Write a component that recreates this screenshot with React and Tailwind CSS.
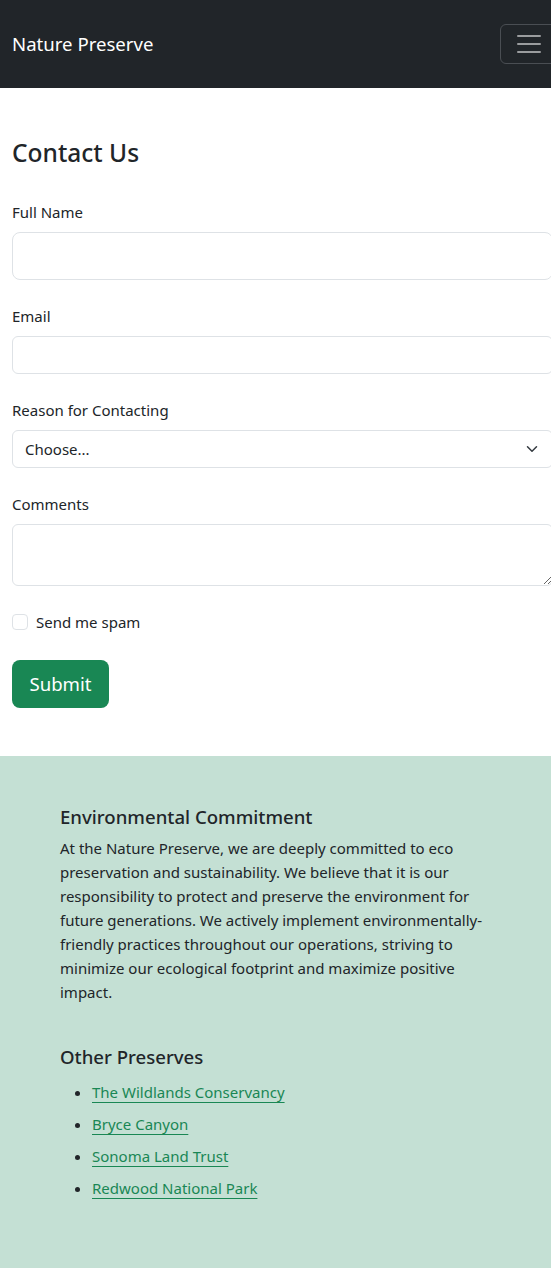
export default function App() {
    const preserves = ["The Wildlands Conservancy", "Bryce Canyon", "Sonoma Land Trust", "Redwood National Park"];

    return (
        <div className="w-[551px] overflow-hidden bg-white text-[#212529]" style={{ fontFamily: '"Noto Sans", "Open Sans", sans-serif' }}>
            <nav className="w-[570px] h-[88px] bg-[#212529] flex items-center justify-between px-3">
                <span className="text-white text-[18.6px] leading-[30px]">Nature Preserve</span>
                <button className="w-[58px] h-[40px] border border-[#4a4e53] rounded-[6px] flex items-center justify-center">
                    <svg width="30" height="30" viewBox="0 0 30 30">
                        <path d="M4 7h22M4 15h22M4 23h22" stroke="rgba(255,255,255,0.55)" strokeWidth="2" strokeLinecap="round" fill="none" />
                    </svg>
                </button>
            </nav>

            <div className="w-[565px] px-3 pt-[49px] pb-12">
                <h2 className="text-[24.5px] leading-[31px] font-medium mb-8">Contact Us</h2>

                <label className="block text-[15px] leading-6 mb-2">Full Name</label>
                <input type="text" className="block w-full h-[48px] border border-[#dee2e6] rounded-[8px] mb-6 px-4" />

                <label className="block text-[15px] leading-6 mb-2">Email</label>
                <input type="email" className="block w-full h-[38px] border border-[#dee2e6] rounded-[6px] mb-6 px-3" />

                <label className="block text-[15px] leading-6 mb-2">Reason for Contacting</label>
                <div className="w-full h-[38px] border border-[#dee2e6] rounded-[6px] mb-6 flex items-center justify-between pl-3 pr-3 text-[15px]">
                    <span>Choose...</span>
                    <svg width="16" height="12" viewBox="0 0 16 16">
                        <path d="m2 5 6 6 6-6" stroke="#343a40" strokeWidth="2" strokeLinecap="round" strokeLinejoin="round" fill="none" />
                    </svg>
                </div>

                <label className="block text-[15px] leading-6 mb-2">Comments</label>
                <textarea className="block w-full h-[62px] border border-[#dee2e6] rounded-[6px] mb-6 px-3 py-1.5" />

                <div className="flex items-center h-6 mb-[26px]">
                    <span className="w-4 h-4 border border-[#dee2e6] rounded-[4px] bg-white" />
                    <span className="ml-2 text-[15px]">Send me spam</span>
                </div>

                <button className="bg-[#198754] text-white text-[18.6px] leading-[30px] h-[48px] w-[97px] rounded-[8px]">Submit</button>
            </div>

            <section className="bg-[#c4e0d4] pt-[49px] pb-12 px-[60px] min-h-[513px]">
                <h5 className="text-[18.6px] leading-6 font-medium mb-[7px]">Environmental Commitment</h5>
                <p className="text-[15px] leading-6 w-[450px] mb-[41px]">
                    At the Nature Preserve, we are deeply committed to eco preservation and sustainability. We believe that it is our responsibility to protect and preserve the environment for future generations. We actively implement environmentally-friendly practices throughout our operations, striving to minimize our ecological footprint and maximize positive impact.
                </p>
                <h5 className="text-[18.6px] leading-6 font-medium mb-[11px]">Other Preserves</h5>
                <ul className="list-disc pl-8 text-[15px] leading-6">
                    {preserves.map((p, i) => (
                        <li key={i} className="mb-2">
                            <a href="#" className="text-[#198754] underline underline-offset-4 decoration-1">{p}</a>
                        </li>
                    ))}
                </ul>
            </section>
        </div>
    );
}
